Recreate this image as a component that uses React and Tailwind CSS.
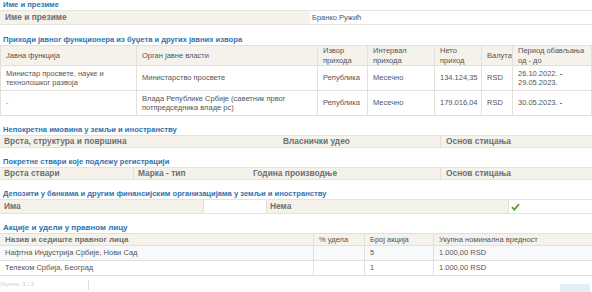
import React from "react";

const H = ({ children, cls = "" }) => (
  <div className={"text-[7.6px] font-bold text-[#2f72ae] leading-[10px] pl-[3px] " + cls}>{children}</div>
);

const L = "font-bold text-[#707070] text-[8.4px]";

export default function App() {
  return (
    <div className="w-[592px] h-[292px] overflow-hidden bg-white text-[#555] text-[7.5px] leading-[9.5px]" style={{ fontFamily: '"Liberation Sans", Arial, sans-serif' }}>
      <H>Име и презиме</H>
      <div className="grid grid-cols-[310px_1fr] h-[15px] border-y border-[#e6e3dc]">
        <div className={"bg-[#f4f2eb] pl-[5px] flex items-center " + L}>Име и презиме</div>
        <div className="pl-[2px] flex items-center">Бранко Ружић</div>
      </div>

      <H cls="mt-[10px]">Приходи јавног функционера из буџета и других јавних извора</H>
      <div className="grid grid-cols-[135px_181px_50px_67px_47px_31px_1fr] border border-[#e3e0d9]">
        {["Јавна функција", "Орган јавне власти", "Извор прихода", "Интервал прихода", "Нето приход", "Валута", "Период обављања од - до"].map((t, i) => (
          <div key={i} className={"bg-[#f4f2eb] h-[20px] px-[5px] flex items-center border-b border-[#e3e0d9] " + (i ? "border-l" : "")}>{t}</div>
        ))}
        {["Министар просвете, науке и технолошког развоја", "Министарство просвете", "Република", "Месечно", "134.124,35", "RSD"].map((t, i) => (
          <div key={i} className={"h-[25px] px-[5px] flex items-center border-b border-[#e3e0d9] " + (i ? "border-l" : "")}>{t}</div>
        ))}
        <div className="h-[25px] px-[5px] flex items-center border-b border-l border-[#e3e0d9]">
          <div>26.10.2022. <b>-</b><br />29.05.2023.</div>
        </div>
        {["-", "Влада Републике Србије (саветник првог потпредседника владе рс)", "Република", "Месечно", "179.016,04", "RSD"].map((t, i) => (
          <div key={i} className={"h-[24px] px-[5px] flex items-center " + (i ? "border-l border-[#e3e0d9]" : "text-[#b87333]")}>{t}</div>
        ))}
        <div className="h-[24px] px-[5px] flex items-center border-l border-[#e3e0d9]">
          <div>30.05.2023. <b>-</b></div>
        </div>
      </div>

      <H cls="mt-[9px]">Непокретна имовина у земљи и иностранству</H>
      <div className={"grid grid-cols-[280px_160px_1fr] h-[13px] bg-[#f4f2eb] border-y border-[#e6e3dc] " + L}>
        <div className="pl-[4px] flex items-center">Врста, структура и површина</div>
        <div className="pl-[3px] flex items-center">Власнички удео</div>
        <div className="pl-[5px] flex items-center border-l border-[#e3e0d9]">Основ стицања</div>
      </div>

      <H cls="mt-[9px]">Покретне ствари које подлежу регистрацији</H>
      <div className={"grid grid-cols-[133px_117px_190px_1fr] h-[13px] bg-[#f4f2eb] border-y border-[#e6e3dc] " + L}>
        <div className="pl-[4px] flex items-center">Врста ствари</div>
        <div className="pl-[4px] flex items-center border-l border-[#e3e0d9]">Марка - тип</div>
        <div className="pl-[3px] flex items-center">Година производње</div>
        <div className="pl-[5px] flex items-center border-l border-[#e3e0d9]">Основ стицања</div>
      </div>

      <H cls="mt-[9px]">Депозити у банкама и другим финансијским организацијама у земљи и иностранству</H>
      <div className={"grid grid-cols-[203px_63px_242px_1fr] h-[15px] border-y border-[#e6e3dc] " + L}>
        <div className="pl-[4px] flex items-center bg-[#f4f2eb]">Има</div>
        <div className="bg-white border-l border-[#e3e0d9]"></div>
        <div className="pl-[3px] flex items-center bg-[#f4f2eb] border-l border-[#e3e0d9]">Нема</div>
        <div className="pl-[2px] flex items-center border-l border-[#e3e0d9]">
          <svg width="9" height="8" viewBox="0 0 9 8"><path d="M1 4.2 L3.4 6.6 L8 1" fill="none" stroke="#5b9a2b" strokeWidth="1.8" /></svg>
        </div>
      </div>

      <H cls="mt-[8px] text-[8px] leading-[11px]">Акције и удели у правном лицу</H>
      <div className="grid grid-cols-[313px_51px_69px_1fr] border-y border-[#e3e0d9]">
        {["Назив и седиште правног лица", "% удела", "Број акција", "Укупна номинална вредност"].map((t, i) => (
          <div key={i} className={"bg-[#f4f2eb] h-[12px] px-[5px] flex items-center border-b border-[#e3e0d9] " + (i ? "border-l" : L + " text-[8px]")}>{t}</div>
        ))}
        {["Нафтна Индустрија Србије, Нови Сад", "", "5", "1.000,00 RSD"].map((t, i) => (
          <div key={i} className={"bg-[#f8f9fb] h-[15px] px-[5px] flex items-center border-b border-[#e3e0d9] " + (i ? "border-l" : "")}>{t}</div>
        ))}
        {["Телеком Србија, Београд", "", "1", "1.000,00 RSD"].map((t, i) => (
          <div key={i} className={"h-[14px] px-[5px] flex items-center " + (i ? "border-l border-[#e3e0d9]" : "")}>{t}</div>
        ))}
      </div>
      <div className="flex items-start h-[16px] pt-[4px]">
        <div className="w-[89px] h-[10px] border-r border-[#ddd] text-[6px] text-[#ccc] leading-[8px]">Укупно: 1 / 2</div>
        <div className="flex-1"></div>
        <div className="w-[30px] h-[8px] mt-[4px] mr-[2px] bg-[#e4ecf4] rounded-t-[2px]"></div>
      </div>
    </div>
  );
}
